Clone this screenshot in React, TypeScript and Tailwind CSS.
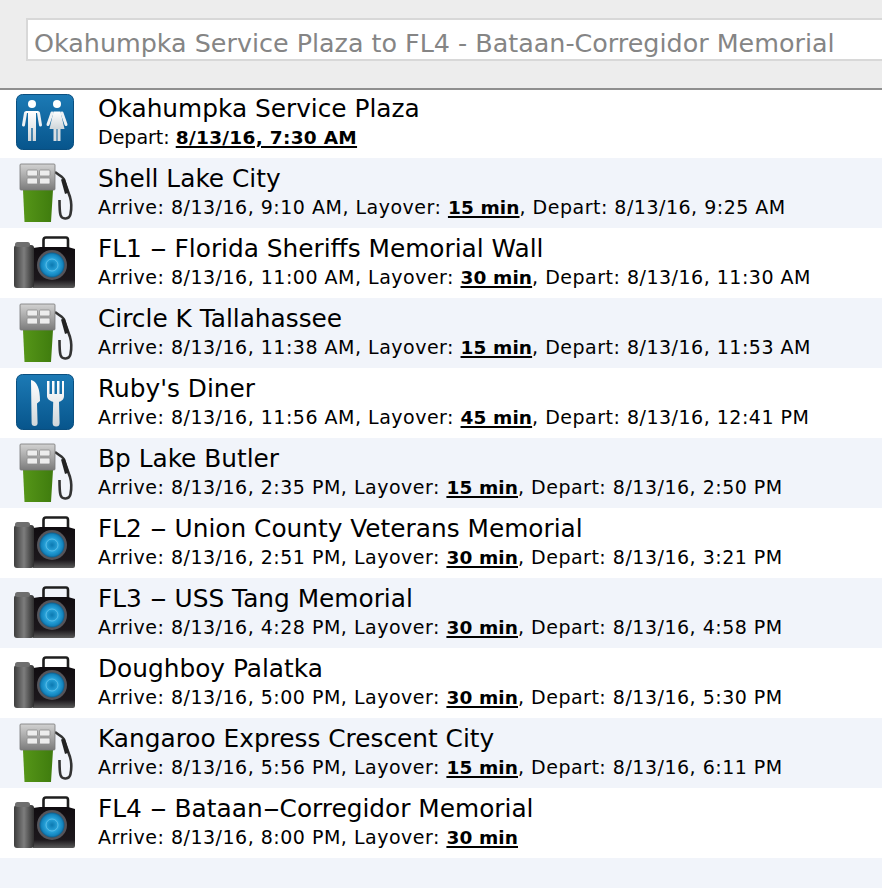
type StopKind = "restroom" | "gas" | "camera" | "food";

interface Stop {
  kind: StopKind;
  name: string;
  arrive?: string;
  layover?: string;
  depart?: string;
}

const STOPS: Stop[] = [
  { kind: "restroom", name: "Okahumpka Service Plaza", depart: "8/13/16, 7:30 AM" },
  { kind: "gas", name: "Shell Lake City", arrive: "8/13/16, 9:10 AM", layover: "15 min", depart: "8/13/16, 9:25 AM" },
  { kind: "camera", name: "FL1 - Florida Sheriffs Memorial Wall", arrive: "8/13/16, 11:00 AM", layover: "30 min", depart: "8/13/16, 11:30 AM" },
  { kind: "gas", name: "Circle K Tallahassee", arrive: "8/13/16, 11:38 AM", layover: "15 min", depart: "8/13/16, 11:53 AM" },
  { kind: "food", name: "Ruby's Diner", arrive: "8/13/16, 11:56 AM", layover: "45 min", depart: "8/13/16, 12:41 PM" },
  { kind: "gas", name: "Bp Lake Butler", arrive: "8/13/16, 2:35 PM", layover: "15 min", depart: "8/13/16, 2:50 PM" },
  { kind: "camera", name: "FL2 - Union County Veterans Memorial", arrive: "8/13/16, 2:51 PM", layover: "30 min", depart: "8/13/16, 3:21 PM" },
  { kind: "camera", name: "FL3 - USS Tang Memorial", arrive: "8/13/16, 4:28 PM", layover: "30 min", depart: "8/13/16, 4:58 PM" },
  { kind: "camera", name: "Doughboy Palatka", arrive: "8/13/16, 5:00 PM", layover: "30 min", depart: "8/13/16, 5:30 PM" },
  { kind: "gas", name: "Kangaroo Express Crescent City", arrive: "8/13/16, 5:56 PM", layover: "15 min", depart: "8/13/16, 6:11 PM" },
  { kind: "camera", name: "FL4 - Bataan-Corregidor Memorial", arrive: "8/13/16, 8:00 PM", layover: "30 min" },
];

function SharedDefs() {
  return (
    <svg width="0" height="0" className="absolute">
      <defs>
        <linearGradient id="tile" x1="0" y1="0" x2="0" y2="1">
          <stop offset="0" stopColor="#1c7ab5" />
          <stop offset="1" stopColor="#07558c" />
        </linearGradient>
        <linearGradient id="figure" x1="0" y1="0" x2="0" y2="1">
          <stop offset="0" stopColor="#ffffff" />
          <stop offset="1" stopColor="#cfd6da" />
        </linearGradient>
        <linearGradient id="pumpTop" x1="0" y1="0" x2="0" y2="1">
          <stop offset="0" stopColor="#d2d2d2" />
          <stop offset="1" stopColor="#7c7c7c" />
        </linearGradient>
        <linearGradient id="pumpBody" x1="0" y1="0" x2="1" y2="0">
          <stop offset="0" stopColor="#569618" />
          <stop offset="1" stopColor="#3f7c0e" />
        </linearGradient>
        <linearGradient id="grip" x1="0" y1="0" x2="1" y2="0">
          <stop offset="0" stopColor="#3c3c3c" />
          <stop offset="0.5" stopColor="#7d7d7d" />
          <stop offset="1" stopColor="#2e2e2e" />
        </linearGradient>
        <linearGradient id="cameraBody" x1="0" y1="0" x2="0" y2="1">
          <stop offset="0" stopColor="#100c10" />
          <stop offset="0.8" stopColor="#1c181c" />
          <stop offset="1" stopColor="#5a5a5a" />
        </linearGradient>
        <radialGradient id="lens">
          <stop offset="0" stopColor="#0c78b0" />
          <stop offset="0.5" stopColor="#2aa6dd" />
          <stop offset="0.85" stopColor="#1484bd" />
          <stop offset="1" stopColor="#0b5c8a" />
        </radialGradient>
      </defs>
    </svg>
  );
}

function StopIcon({ kind }: { kind: StopKind }) {
  return (
    <svg width="62" height="60" viewBox="0 0 62 60" className="shrink-0">
      {kind === "restroom" && (
        <g>
          <rect x="2.500" y="2.500" width="57" height="55" rx="6" fill="url(#tile)" stroke="#0a4f80" />
          <circle cx="18" cy="12" r="4" fill="#fff" />
          <path d="M14 20h8v29h-3.300V36h-1.400v13H14z" fill="url(#figure)" />
          <path d="M11.500 21L9.500 33M24.500 21l2 12" stroke="#eef1f3" strokeWidth="3" strokeLinecap="round" fill="none" />
          <path d="M11.500 20h13" stroke="#fff" strokeWidth="2" />
          <circle cx="43" cy="12" r="4" fill="#fff" />
          <path d="M39.500 19.500h7L50.500 37h-15z" fill="url(#figure)" />
          <path d="M39.500 37h3v12h-3zM43.500 37h3v12h-3z" fill="#d8dee2" />
          <path d="M38 21l-4 11.500M48 21l4 11.500" stroke="#eef1f3" strokeWidth="3" strokeLinecap="round" fill="none" />
        </g>
      )}
      {kind === "food" && (
        <g>
          <rect x="2.500" y="2.500" width="57" height="55" rx="6" fill="url(#tile)" stroke="#0a4f80" />
          <path d="M17 8c6 1 9 9 9 21l-3 2.500.600 19.500a3 3 0 0 1-6 0z" fill="url(#figure)" />
          <path d="M33 9h2.500v13h2.500V9h2.500v13h2.500V9h2.500v13h2.500V9H50v15c0 3.500-2.500 5-5 6l.600 21a3.500 3.500 0 0 1-7 0l.600-21c-2.500-1-6.200-2.500-6.200-6z" fill="url(#figure)" />
        </g>
      )}
      {kind === "gas" && (
        <g>
          <path d="M41 10l7 5c1.500 1 2 2.500 2.500 4.500L56 35c1.500 5 1.500 12 .500 17-1 5.500-8.500 6-10 1-1-3.500-1-9-1-15" fill="none" stroke="#333" strokeWidth="2.600" />
          <path d="M47 17.500l4-1 4 14-4 1.500z" fill="#222" />
          <path d="M9 28h30l-2 32H10.500z" fill="url(#pumpBody)" />
          <rect x="6" y="2" width="35" height="26" rx="1" fill="url(#pumpTop)" stroke="#777" strokeWidth="0.800" />
          <rect x="13" y="8" width="10.500" height="6" rx="1" fill="#ededed" stroke="#8c8c8c" strokeWidth="0.800" />
          <rect x="25.500" y="8" width="10.500" height="6" rx="1" fill="#ededed" stroke="#8c8c8c" strokeWidth="0.800" />
          <rect x="13" y="16" width="10.500" height="6" rx="1" fill="#ededed" stroke="#8c8c8c" strokeWidth="0.800" />
          <rect x="25.500" y="16" width="10.500" height="6" rx="1" fill="#ededed" stroke="#8c8c8c" strokeWidth="0.800" />
        </g>
      )}
      {kind === "camera" && (
        <g>
          <path d="M29.500 16V8c0-1.500 1-2.500 2.500-2.500h20c1.200 0 2 1 2 2.500v8" fill="none" stroke="#1e1e1e" strokeWidth="2.600" />
          <path d="M19 16l7-1h28l7 2v37a2 2 0 0 1-2 2H19z" fill="url(#cameraBody)" />
          <rect x="0" y="13" width="20" height="43" rx="3" fill="url(#grip)" />
          <rect x="1" y="10" width="15" height="5" rx="2.500" fill="#6e6e6e" />
          <circle cx="38" cy="33" r="15" fill="#55555b" />
          <circle cx="38" cy="33" r="12.500" fill="url(#lens)" />
          <circle cx="38" cy="33" r="6" fill="none" stroke="#7ccbee" strokeWidth="1" opacity="0.6" />
        </g>
      )}
    </svg>
  );
}

// the hyphen in the screenshot's font is much wider than DejaVu's
function StopName({ name }: { name: string }) {
  const parts = name.split("-");
  return (
    <div className="text-[24.800px] leading-[28px]">
      {parts.map((part, i) => (
        <span key={i}>
          {i > 0 && <span className="inline-block scale-x-[2] px-[4px]">-</span>}
          {part}
        </span>
      ))}
    </div>
  );
}

function StopRow({ stop, index }: { stop: Stop; index: number }) {
  return (
    <div className={`flex h-[70px] pl-[14px] ${index % 2 === 0 ? "bg-white" : "bg-[#f1f4fa]"}`}>
      <div className="pt-[4px]">
        <StopIcon kind={stop.kind} />
      </div>
      <div className="pl-[22px] pt-[7px] whitespace-nowrap text-black">
        <StopName name={stop.name} />
        <div className="text-[19px] leading-[28px] tracking-[0.5px]">
          {stop.arrive && <span>Arrive: {stop.arrive}, </span>}
          {stop.layover && (
            <span>
              Layover:{" "}
              <b className="text-[18.500px] font-bold tracking-[0.1px] underline decoration-2 underline-offset-2">
                {stop.layover}
              </b>
            </span>
          )}
          {stop.layover && stop.depart && <span>, </span>}
          {stop.depart &&
            (stop.layover ? (
              <span>Depart: {stop.depart}</span>
            ) : (
              <span className="tracking-normal">
                Depart:{" "}
                <b className="text-[18.500px] font-bold tracking-[0.3px] underline decoration-2 underline-offset-2">
                  {stop.depart}
                </b>
              </span>
            ))}
        </div>
      </div>
    </div>
  );
}

export default function App() {
  return (
    <div className="h-[888px] w-[882px] overflow-hidden bg-[#f1f4fa] font-['DejaVu_Sans',sans-serif]">
      <SharedDefs />
      <header className="relative z-10 h-[90px] border-b-2 border-[#8f8f8f] bg-[#ededed] pl-[26px] pt-[18px]">
        <input
          readOnly
          placeholder="Okahumpka Service Plaza to FL4 - Bataan-Corregidor Memorial"
          className="h-[43px] w-[880px] border-2 border-[#d8d8d8] bg-white px-[6px] pt-[6px] text-[25.400px] placeholder:text-[#858585]"
        />
      </header>
      <div className="-mt-[2px]">
        {STOPS.map((stop, i) => (
          <StopRow key={stop.name} stop={stop} index={i} />
        ))}
      </div>
    </div>
  );
}
